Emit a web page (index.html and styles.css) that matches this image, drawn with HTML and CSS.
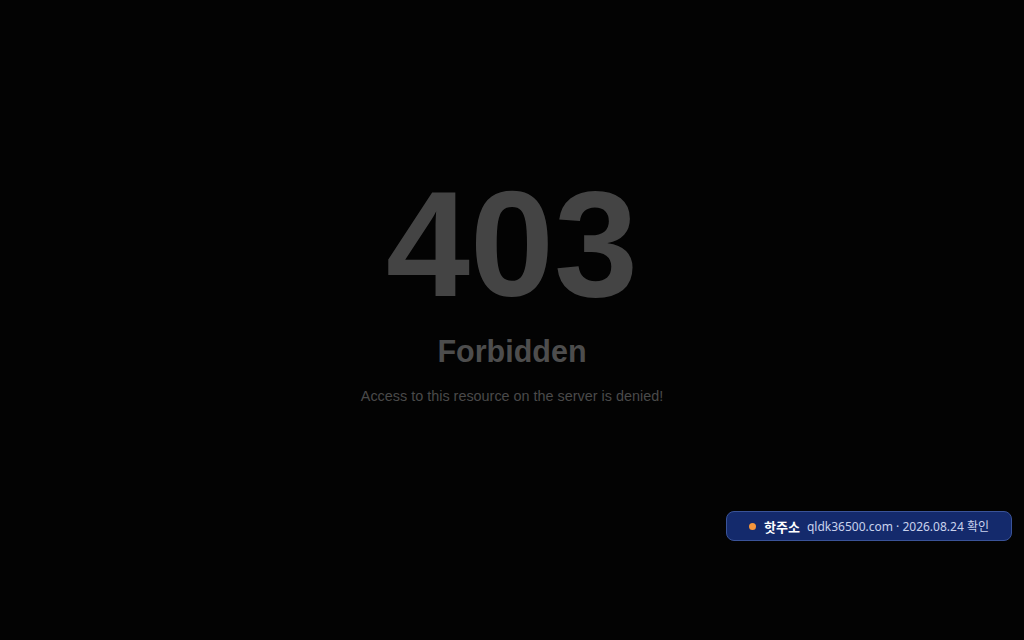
FILE: index.html
```html
<!DOCTYPE html>
<html lang="en">
<head>
<meta charset="utf-8">
<title>403 Forbidden</title>
<link rel="stylesheet" href="styles.css">
</head>
<body>
<main class="error">
  <h1 class="code">403</h1>
  <h2 class="title">Forbidden</h2>
  <p class="message">Access to this resource on the server is denied!</p>
</main>
<div class="badge">
  <span class="dot"></span>
  <span class="badge-label">핫주소</span>
  <span class="badge-text">qldk36500.com · 2026.08.24 확인</span>
</div>
</body>
</html>
```
FILE: styles.css
```css
html, body {
  margin: 0;
  padding: 0;
  background: #030303;
  height: 100%;
}
body {
  font-family: "Liberation Sans", Arial, sans-serif;
}
.error {
  display: flex;
  flex-direction: column;
  align-items: center;
  padding-top: 168px;
  text-align: center;
}
.code {
  margin: 0;
  font-size: 151px;
  line-height: 1;
  font-weight: 700;
  color: #444444;
}
.title {
  margin: 14px 0 0;
  font-size: 30.5px;
  line-height: 36px;
  font-weight: 700;
  color: #4d4d4d;
}
.message {
  margin: 18px 0 0;
  font-size: 14.4px;
  line-height: 18px;
  color: #4a4a4a;
}
.badge {
  position: fixed;
  right: 12px;
  bottom: 99px;
  width: 284px;
  height: 28px;
  box-sizing: content-box;
  display: flex;
  align-items: center;
  justify-content: center;
  background: #142a6c;
  border: 1px solid #3a5398;
  border-radius: 8px;
  font-family: "Noto Sans", "Noto Sans CJK KR", sans-serif;
  font-size: 12px;
}
.dot {
  width: 7px;
  height: 7px;
  border-radius: 50%;
  background: #f5963c;
  margin-right: 8px;
}
.badge-label {
  color: #ffffff;
  font-weight: 700;
  font-size: 13px;
  margin-right: 7px;
}
.badge-text {
  color: #c9d2ec;
}
```
